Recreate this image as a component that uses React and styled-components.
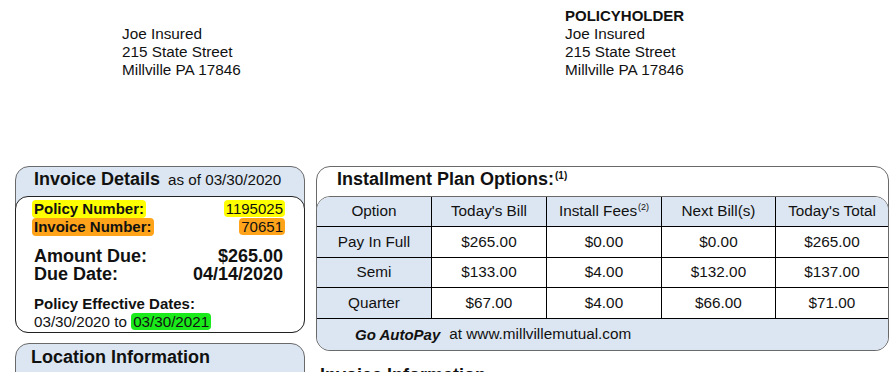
import React from "react";
import styled, { createGlobalStyle } from "styled-components";

const Global = createGlobalStyle`
  html, body { margin: 0; padding: 0; background: #fff; }
  body {
    font-family: "Liberation Sans", Arial, Helvetica, sans-serif;
    color: #111;
    width: 895px;
    height: 372px;
    overflow: hidden;
  }
`;

const BLUE = "#dce6f2";

const Page = styled.div`
  width: 895px;
`;

const AddressBar = styled.header`
  box-sizing: border-box;
  height: 166px;
  padding: 7px 0 0 122px;
  display: grid;
  grid-template-columns: 443px auto;
`;

const Address = styled.div`
  font-size: 15.3px;
  line-height: 18px;
  padding-top: ${(p) => (p.$offset ? "18px" : "0")};
`;

const Line = styled.div`
  font-weight: ${(p) => (p.$bold ? 700 : 400)};
  font-size: ${(p) => (p.$bold ? "15px" : "inherit")};
  white-space: nowrap;
`;

const Main = styled.main`
  display: grid;
  grid-template-columns: 290px 573px;
  column-gap: 11px;
  padding-left: 15px;
  align-items: start;
`;

const Column = styled.div`
  display: flex;
  flex-direction: column;
`;

const Card = styled.section`
  box-sizing: border-box;
  border: 1px solid #6a6a6a;
  border-radius: 14px;
  background: ${(p) => p.$bg || BLUE};
  margin-top: ${(p) => p.$mt || 0}px;
  min-height: ${(p) => p.$minH || 0}px;
`;

const CardHeader = styled.div`
  box-sizing: border-box;
  height: 29px;
  padding: 1px 0 0 ${(p) => p.$pl}px;
  display: flex;
  align-items: baseline;
  gap: 8px;
  white-space: nowrap;
`;

const CardTitle = styled.h2`
  margin: 0;
  font-size: 18px;
  line-height: 22px;
  font-weight: 700;
`;

const Sup = styled.sup`
  font-size: ${(p) => p.$size || 10}px;
  font-weight: ${(p) => (p.$bold ? 700 : 400)};
  vertical-align: top;
  position: relative;
  top: ${(p) => p.$top || 0}px;
  line-height: 1;
  margin-left: 1px;
`;

const AsOf = styled.span`
  font-size: 15.2px;
`;

const InvoiceBody = styled.div`
  margin: 0 -1px -1px;
  border: 1px solid #222;
  border-radius: 13px;
  background: #fff;
  padding: 3px 21px 1px 18px;
`;

const Group = styled.div`
  margin-top: ${(p) => p.$mt || 0}px;
`;

const Row = styled.div`
  display: flex;
  justify-content: space-between;
  align-items: baseline;
  font-size: ${(p) => p.$size}px;
  line-height: ${(p) => p.$lh}px;
  font-weight: ${(p) => (p.$bold ? 700 : 400)};
  white-space: nowrap;
`;

const Value = styled.span`
  font-weight: ${(p) => (p.$bold ? 700 : 400)};
`;

const Plain = styled.span`
  font-size: 15.2px;
`;

const Mark = styled.span`
  background: ${(p) => p.$color};
  border-radius: 4px;
  padding: 0 2px;
  margin-left: ${(p) => (p.$edge === "left" ? "-2px" : "0")};
  margin-right: ${(p) => (p.$edge === "right" ? "-2px" : "0")};
`;

const LocationTitle = styled(CardTitle)`
  padding: 2px 0 0 15px;
`;

const PlanTable = styled.div`
  margin: 0 -1px -1px;
  border: 1px solid #6a6a6a;
  border-radius: 14px;
  overflow: hidden;
  background: #fff;
`;

const Grid = styled.div`
  display: grid;
  grid-template-columns: 115px 115px 115px 114px 1fr;
  grid-template-rows: 30px 31px 30px 31px;
`;

const Cell = styled.div`
  box-sizing: border-box;
  display: flex;
  align-items: center;
  justify-content: center;
  font-size: 15.3px;
  white-space: nowrap;
  border-bottom: 1px solid #000;
  border-right: ${(p) => (p.$last ? "none" : "1px solid #000")};
  background: ${(p) => (p.$shade ? BLUE : "#fff")};
  padding-bottom: 1px;
`;

const CellText = styled.span`
  line-height: 18px;
`;

const Footer = styled.div`
  box-sizing: border-box;
  height: 31px;
  background: ${BLUE};
  display: flex;
  align-items: center;
  padding: 0 0 1px 38px;
  font-size: 15.3px;
  white-space: nowrap;
`;

const AutoPay = styled.strong`
  font-style: italic;
  font-size: 15px;
  margin-right: 9px;
`;

const SectionHeading = styled.h2`
  margin: 13px 0 0 4px;
  font-size: 18px;
  line-height: 22px;
  font-weight: 700;
  white-space: nowrap;
`;

const headers = ["Option", "Today's Bill", "Install Fees", "Next Bill(s)", "Today's Total"];
const rows = [
  ["Pay In Full", "$265.00", "$0.00", "$0.00", "$265.00"],
  ["Semi", "$133.00", "$4.00", "$132.00", "$137.00"],
  ["Quarter", "$67.00", "$4.00", "$66.00", "$71.00"],
];

export default function App() {
  return (
    <Page>
      <Global />
      <AddressBar>
        <Address $offset>
          <Line>Joe Insured</Line>
          <Line>215 State Street</Line>
          <Line>Millville PA 17846</Line>
        </Address>
        <Address>
          <Line $bold>POLICYHOLDER</Line>
          <Line>Joe Insured</Line>
          <Line>215 State Street</Line>
          <Line>Millville PA 17846</Line>
        </Address>
      </AddressBar>

      <Main>
        <Column>
          <Card>
            <CardHeader $pl={18}>
              <CardTitle>Invoice Details</CardTitle>
              <AsOf>as of 03/30/2020</AsOf>
            </CardHeader>
            <InvoiceBody>
              <Group>
                <Row $size={15} $lh={18} $bold>
                  <Mark $color="#ffff00" $edge="left">Policy Number:</Mark>
                  <Value>
                    <Mark $color="#ffff00" $edge="right">1195025</Mark>
                  </Value>
                </Row>
                <Row $size={15} $lh={18} $bold>
                  <Mark $color="#ffa31a" $edge="left">Invoice Number:</Mark>
                  <Value>
                    <Mark $color="#ffa31a" $edge="right">70651</Mark>
                  </Value>
                </Row>
              </Group>
              <Group $mt={11}>
                <Row $size={18} $lh={18} $bold>
                  <span>Amount Due:</span>
                  <Value $bold>$265.00</Value>
                </Row>
                <Row $size={18} $lh={18} $bold>
                  <span>Due Date:</span>
                  <Value $bold>04/14/2020</Value>
                </Row>
              </Group>
              <Group $mt={11}>
                <Row $size={15} $lh={19} $bold>
                  <span>Policy Effective Dates:</span>
                </Row>
                <Row $size={15} $lh={18}>
                  <Plain>
                    03/30/2020 to <Mark $color="#1aea1a">03/30/2021</Mark>
                  </Plain>
                </Row>
              </Group>
            </InvoiceBody>
          </Card>

          <Card $mt={10} $minH={60}>
            <LocationTitle>Location Information</LocationTitle>
          </Card>
        </Column>

        <Column>
          <Card $bg="#fff">
            <CardHeader $pl={20}>
              <CardTitle>
                Installment Plan Options:
                <Sup $bold $size={10} $top={3}>(1)</Sup>
              </CardTitle>
            </CardHeader>
            <PlanTable>
              <Grid>
                {headers.map((h, i) => (
                  <Cell key={h} $shade $last={i === 4}>
                    <CellText>
                      {h}
                      {h === "Install Fees" && <Sup $size={9} $top={1}>(2)</Sup>}
                    </CellText>
                  </Cell>
                ))}
                {rows.map((r) =>
                  r.map((v, i) => (
                    <Cell key={r[0] + i} $shade={i === 0} $last={i === 4}>
                      <CellText>{v}</CellText>
                    </Cell>
                  ))
                )}
              </Grid>
              <Footer>
                <AutoPay>Go AutoPay</AutoPay>
                at www.millvillemutual.com
              </Footer>
            </PlanTable>
          </Card>
          <SectionHeading>Invoice Information</SectionHeading>
        </Column>
      </Main>
    </Page>
  );
}
